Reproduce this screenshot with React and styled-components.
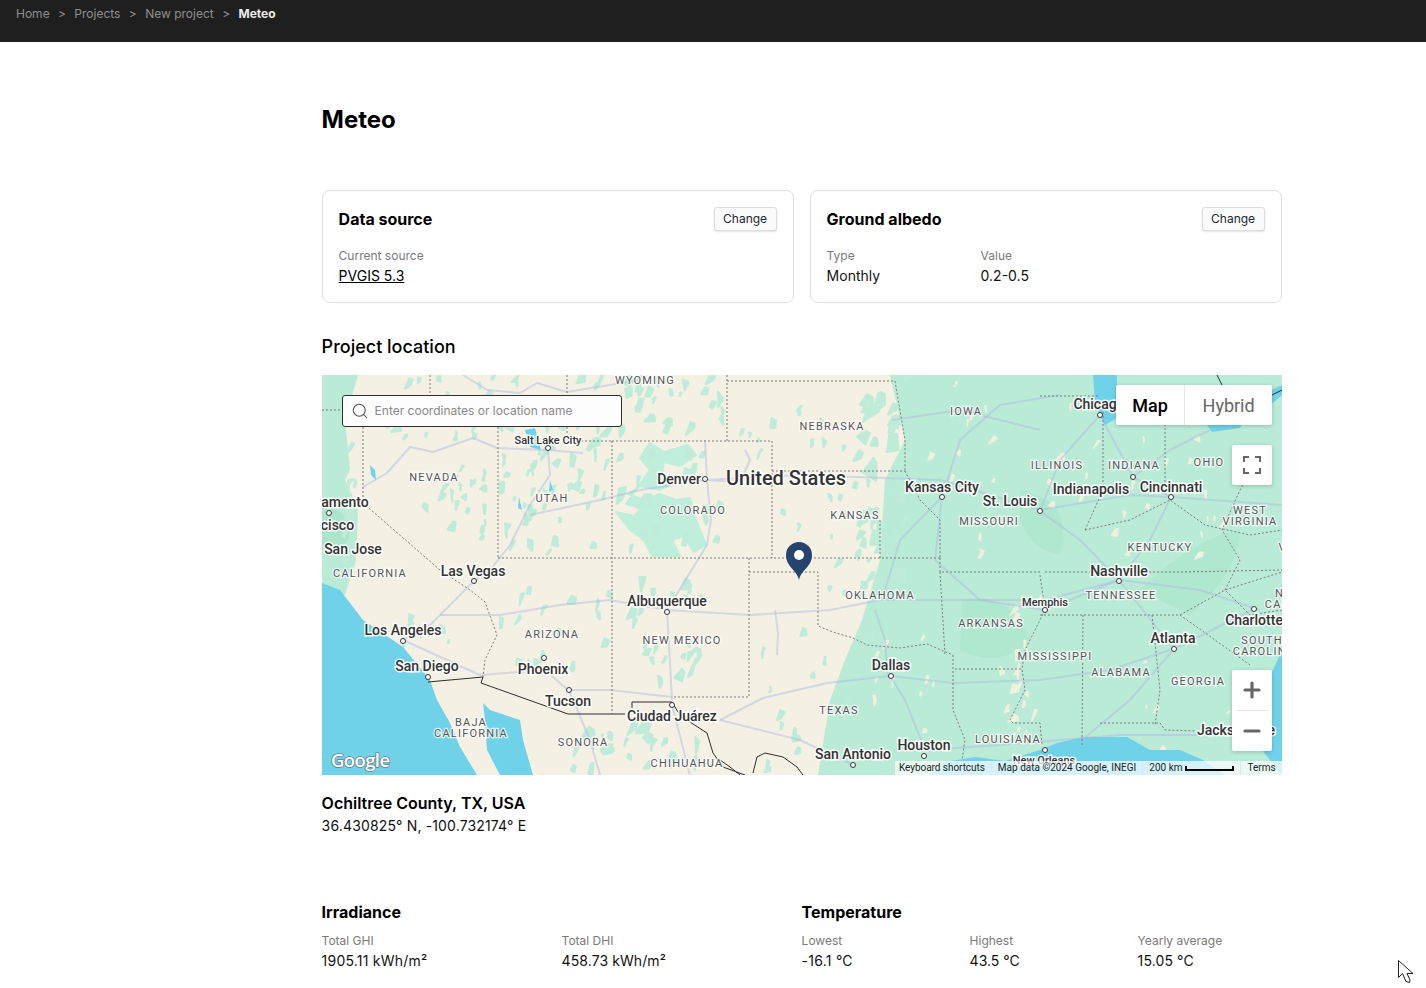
import React from "react";
import styled, { createGlobalStyle } from "styled-components";
import { Search, Plus, Minus } from "lucide-react";

const GlobalStyle = createGlobalStyle`
  html, body {
    margin: 0;
    height: 100%;
    overflow: hidden;
    background: #fff;
    font-family: Inter, "Liberation Sans", sans-serif;
    color: #000;
  }
  * { box-sizing: border-box; }
`;

const Topbar = styled.header`
  height: 42px;
  background: #1f1f1f;
  padding: 6px 16px;
  display: flex;
  align-items: flex-start;
  gap: 8.4px;
  font-size: 12px;
  line-height: 16px;
  color: #8f8f8f;
`;
const Crumb = styled.span`
  font-weight: ${(p) => (p.$active ? 700 : 400)};
  color: ${(p) => (p.$active ? "#ebebeb" : "#8f8f8f")};
`;
const Main = styled.main`
  width: 960px;
  margin-left: 321.6px;
  padding-top: 62px;
`;
const Title = styled.h1`
  margin: 0 0 54px;
  font-size: 24px;
  line-height: 32px;
  font-weight: 700;
`;
const Cards = styled.div`
  display: grid;
  grid-template-columns: 1fr 1fr;
  gap: 16px;
`;
const Card = styled.section`
  height: 113px;
  border: 1px solid #e0e0e0;
  border-radius: 8px;
  padding: 16px;
`;
const CardHead = styled.div`
  display: flex;
  justify-content: space-between;
  align-items: center;
  height: 24px;
  margin-bottom: 17px;
`;
const CardTitle = styled.h2`
  margin: 0;
  font-size: 16px;
  line-height: 24px;
  font-weight: 650;
`;
const Change = styled.button`
  width: 63px;
  height: 24px;
  padding: 0 0 2px;
  border: 1px solid #dcdcdc;
  border-radius: 3px;
  background: #fafafa;
  box-shadow: 0 1px 2px rgba(0, 0, 0, 0.12);
  font: 400 12px Inter, sans-serif;
  color: #1c2733;
`;
const Fields = styled.div`
  display: grid;
  grid-template-columns: 154px 1fr;
`;
const Label = styled.div`
  font-size: 12px;
  line-height: 16px;
  color: #7a7a7a;
  margin-bottom: 2px;
`;
const Value = styled.div`
  font-size: 14px;
  line-height: 20px;
  color: #111;
  letter-spacing: ${(p) => p.$track || 0}px;
`;
const SourceLink = styled.a`
  display: block;
  font-size: 14px;
  line-height: 20px;
  color: #000;
  text-decoration: underline;
`;
const SectionTitle = styled.h2`
  margin: 30px 0 14px;
  font-size: 18px;
  line-height: 28px;
  font-weight: 450;
`;
const MapPane = styled.div`
  position: relative;
  width: 960px;
  height: 400px;
  overflow: hidden;
  background: #f5f0e4;
`;
const MapArt = styled.svg`
  display: block;
  width: 960px;
  height: 400px;
`;
const City = styled.text`
  font-family: Roboto, sans-serif;
  font-weight: 500;
  font-size: ${(p) => p.$size || 14}px;
  fill: #333;
  stroke: rgba(255, 255, 255, 0.9);
  stroke-width: 3px;
  paint-order: stroke;
`;
const StateName = styled.text`
  font-family: Roboto, sans-serif;
  font-weight: 400;
  font-size: 11px;
  letter-spacing: 1.2px;
  fill: #555;
  stroke: rgba(255, 255, 255, 0.8);
  stroke-width: 2.5px;
  paint-order: stroke;
`;
const GoogleMark = styled.text`
  font-family: "Open Sans", sans-serif;
  font-weight: 600;
  font-size: 18.5px;
  letter-spacing: -0.6px;
  fill: #fff;
  stroke: #64808a;
  stroke-width: 1.6px;
  paint-order: stroke;
`;
const SearchBox = styled.label`
  position: absolute;
  left: 20px;
  top: 20px;
  width: 280px;
  height: 32px;
  display: flex;
  align-items: center;
  gap: 6px;
  padding: 0 8px;
  background: #fdfdfd;
  border: 1px solid #2f2f2f;
  border-radius: 3px;
  color: #555;
`;
const SearchInput = styled.input`
  flex: 1;
  min-width: 0;
  border: 0;
  padding: 0 0 1px;
  background: transparent;
  outline: none;
  font: 400 12px Inter, sans-serif;
  &::placeholder { color: #8a8a8a; opacity: 1; }
`;
const MapTypes = styled.div`
  position: absolute;
  top: 10px;
  right: 10px;
  display: flex;
  height: 40px;
  background: #fff;
  border-radius: 2px;
  box-shadow: 0 1px 4px rgba(0, 0, 0, 0.2);
`;
const MapType = styled.button`
  height: 40px;
  width: ${(p) => (p.$active ? 68 : 88)}px;
  padding: 0 0 0 1px;
  border: 0;
  border-left: ${(p) => (p.$active ? "0" : "1px solid #e6e6e6")};
  background: transparent;
  font: ${(p) => (p.$active ? 500 : 400)} 18px Roboto, sans-serif;
  color: ${(p) => (p.$active ? "#000" : "#666")};
`;
const FullscreenBtn = styled.button`
  position: absolute;
  top: 70px;
  right: 10px;
  width: 40px;
  height: 40px;
  padding: 0;
  display: grid;
  place-items: center;
  border: 0;
  border-radius: 2px;
  background: #fff;
  box-shadow: 0 1px 4px rgba(0, 0, 0, 0.2);
`;
const ZoomGroup = styled.div`
  position: absolute;
  top: 295px;
  right: 10px;
  width: 40px;
  height: 81px;
  display: flex;
  flex-direction: column;
  align-items: center;
  border-radius: 2px;
  background: #fff;
  box-shadow: 0 1px 4px rgba(0, 0, 0, 0.2);
`;
const ZoomBtn = styled.button`
  width: 40px;
  height: 40px;
  padding: 0;
  display: grid;
  place-items: center;
  border: 0;
  background: transparent;
  color: #666;
`;
const ZoomRule = styled.div`
  width: 30px;
  height: 1px;
  background: #e6e6e6;
`;
const Attribution = styled.div`
  position: absolute;
  right: 0;
  bottom: 0;
  height: 14px;
  display: flex;
  align-items: center;
  background: rgba(255, 255, 255, 0.7);
  font: 400 10px/14px Roboto, sans-serif;
  color: #222;
  white-space: nowrap;
`;
const AttrItem = styled.span`
  padding: ${(p) => (p.$rule ? "0 6px" : "0 6px 0 4px")};
  border-left: ${(p) => (p.$rule ? "1px solid #d8e8ec" : "0")};
  letter-spacing: ${(p) => (p.$rule ? "0" : "-0.05px")};
`;
const ScaleBar = styled.span`
  display: inline-block;
  width: 49px;
  height: 5px;
  margin-left: 3px;
  border: 2px solid #000;
  border-top: 0;
`;
const PlaceName = styled.h3`
  margin: 16px 0 1px;
  font-size: 16px;
  line-height: 24px;
  font-weight: 600;
`;
const Stats = styled.div`
  display: grid;
  grid-template-columns: 480px 480px;
  margin-top: 64px;
`;
const StatTitle = styled.h3`
  margin: 0 0 9px;
  font-size: 16px;
  line-height: 24px;
  font-weight: 650;
`;
const StatRow = styled.div`
  display: grid;
  grid-template-columns: ${(p) => (p.$three ? "168px 168px 1fr" : "240px 1fr")};
`;
const Pointer = styled.svg`
  position: absolute;
  left: 1397px;
  top: 959px;
`;

// seeded scatter so the terrain texture stays the same between runs
function scatter(regions) {
  let seed = 42;
  const rnd = () => {
    seed = (seed * 16807) % 2147483647;
    return seed / 2147483647;
  };
  const out = [];
  regions.forEach(([x0, x1, y0, y1, n, s = 1]) => {
    for (let i = 0; i < n; i++) {
      const x = x0 + rnd() * (x1 - x0);
      const y = y0 + rnd() * (y1 - y0);
      const k = s * (0.4 + rnd() * 0.8);
      const a = (rnd() * 8 - 2) * k;
      const b = (-4 - rnd() * 9) * k;
      const c = (1 + rnd() * 4) * k;
      const d = (rnd() * 4 - 1) * k;
      const e = (rnd() * 5 - 4) * k;
      const f = (3 + rnd() * 7) * k;
      out.push(
        `M${x.toFixed(1)} ${y.toFixed(1)}l${a.toFixed(1)} ${b.toFixed(1)}l${c.toFixed(1)} ${d.toFixed(1)}l${e.toFixed(1)} ${f.toFixed(1)}z`
      );
    }
  });
  return out.join("");
}

const westPatches = scatter([
  [340, 362, 440, 560, 10, 1.1],
  [365, 500, 378, 440, 22, 0.9],
  [420, 498, 470, 540, 20, 0.9],
  [500, 612, 380, 450, 24, 1.3],
  [500, 612, 450, 556, 38, 1.1],
  [612, 725, 380, 440, 26, 1.2],
  [612, 725, 450, 556, 26, 1.2],
  [620, 700, 570, 690, 24, 1.2],
  [500, 610, 590, 680, 18, 0.9],
  [730, 880, 390, 470, 14, 0.9],
  [770, 880, 480, 620, 18, 0.8],
  [360, 480, 620, 680, 16, 1],
  [560, 700, 730, 775, 24, 1.3],
  [760, 850, 630, 775, 14, 0.9],
  [855, 905, 375, 640, 34, 1.6],
]);
const eastPale = scatter([
  [1000, 1040, 600, 740, 26, 1],
  [905, 1000, 385, 560, 14, 0.9],
  [1040, 1240, 395, 560, 30, 0.8],
  [1130, 1260, 660, 760, 8, 0.7],
  [850, 940, 640, 740, 10, 0.8],
]);

const borders = [
  "M322 410H342", "M430 375V395", "M363 427V503L440 570L470 590L485 602L497 635L485 660L483 677",
  "M498 427V558", "M567 375V441H612", "M612 441V714", "M612 441H772V558", "M727 375V441",
  "M727 381H895", "M772 471H905", "M498 558H940", "M749 558V697H672",
  "M749 572H818V626L833 632L853 638L867 645L900 648L927 644L953 655",
  "M940 558V572H1040", "M940 572L945 655", "M953 655V710L965 740L962 760",
  "M955 669H1022L1025 690L1010 720L1013 723H1040L1042 745",
  "M880 520V558", "M905 471L920 500L940 520V558", "M895 381L905 440L905 471",
  "M1040 396H1100", "M1103 400V490L1085 530", "M1165 420V490", "M1040 575L1045 610L1025 650L1022 669",
  "M1040 615H1180L1225 590L1282 572", "M1045 572H1180L1282 570", "M1083 615L1082 745",
  "M1152 615L1160 690L1155 725", "M1100 723H1160L1165 730L1232 732",
  "M1180 615L1215 640L1250 665", "M1282 610L1250 615L1225 590", "M1085 530L1130 520L1170 500L1205 525L1250 535L1282 530",
  "M1225 590L1240 560L1222 530L1240 490L1260 455",
];

const roads = [
  "M463 375L487 390L520 393L537 383L567 392L640 380",
  "M363 487L387 473L410 447L433 452L473 438L497 448L547 450L583 453",
  "M548 450L550 475L530 505L510 545L490 570L475 580L430 625L403 640",
  "M530 515L600 500L640 490L705 480L740 482L750 460L745 450M705 480L800 475L940 480L1040 510L1130 495L1170 497L1282 505",
  "M440 615L500 615L560 605L610 600L667 610L750 615L830 610L880 600L980 600L1045 600L1120 580L1200 590L1260 610",
  "M403 640L480 675L545 670L568 690L610 690L672 697",
  "M720 720L763 698L827 683L890 676L953 683L1040 680L1110 670L1170 650",
  "M720 720L800 740L853 765",
  "M890 676L905 700L925 750", "M888 676L885 640L875 610", "M925 750L1000 745L1060 740L1120 735L1200 735",
  "M705 440L707 480L711 520L707 545L667 610L672 700", "M1100 415L1133 477L1171 497L1150 540L1119 580L1045 610", "M1174 649L1119 580",
  "M1174 649L1130 700L1082 740", "M1174 649L1254 609", "M942 497L935 560L980 600L1045 610", "M1133 477L1170 450L1210 430",
  "M1040 511L1080 540L1119 580", "M1100 415L1060 460L1040 511", "M942 497L960 440L1000 405L1060 395", "M882 600L900 540L942 497",
  "M775 610L778 633L777 655", "M569 690L590 740L600 775", "M672 705L690 775", "M892 420L960 410L1040 430",
];

const states = [
  ["WYOMING", 645, 384], ["NEBRASKA", 832, 430], ["IOWA", 966, 415], ["NEVADA", 434, 481], ["UTAH", 552, 502],
  ["COLORADO", 693, 514], ["KANSAS", 855, 519], ["ILLINOIS", 1057, 469], ["INDIANA", 1134, 469], ["OHIO", 1209, 466],
  ["MISSOURI", 989, 525], ["WEST", 1250, 514], ["VIRGINIA", 1250, 525], ["KENTUCKY", 1160, 551], ["TENNESSEE", 1121, 599],
  ["OKLAHOMA", 880, 599], ["ARKANSAS", 991, 627], ["MISSISSIPPI", 1055, 660], ["ALABAMA", 1121, 676], ["GEORGIA", 1198, 685],
  ["CALIFORNIA", 370, 577], ["ARIZONA", 552, 638], ["NEW MEXICO", 682, 644], ["TEXAS", 839, 714], ["LOUISIANA", 1008, 743],
  ["BAJA", 471, 726], ["CALIFORNIA", 471, 737], ["SONORA", 583, 746], ["CHIHUAHUA", 687, 767], ["SOUTH", 1262, 644],
  ["CAROLINA", 1264, 655], ["NORTH", 1296, 597], ["CAROLINA", 1296, 608], ["VIRGINIA", 1306, 551],
];

const cities = [
  ["Denver", 679, 484], ["Kansas City", 942, 492], ["St. Louis", 1010, 506], ["Indianapolis", 1091, 494],
  ["Cincinnati", 1171, 492], ["Nashville", 1119, 576], ["Atlanta", 1173, 643], ["Las Vegas", 473, 576],
  ["Albuquerque", 667, 606], ["Los Angeles", 403, 635], ["San Diego", 427, 671], ["Phoenix", 543, 674],
  ["Tucson", 568, 706], ["Ciudad Juárez", 672, 721], ["Dallas", 891, 670], ["Houston", 924, 750],
  ["San Antonio", 853, 759], ["Chicago", 1099, 409], ["Charlotte", 1254, 625], ["Jacksonville", 1236, 735],
  ["Sacramento", 331, 507], ["San Francisco", 310, 530], ["San Jose", 353, 554],
];

const dots = [
  [548, 448], [705, 479], [942, 497], [1040, 511], [1133, 477], [1171, 497], [1100, 415], [1119, 581], [1045, 610],
  [1254, 609], [1174, 649], [474, 581], [667, 612], [403, 641], [428, 677], [544, 658], [569, 690], [672, 705],
  [891, 676], [924, 756], [853, 765], [329, 513], [1045, 750],
];

function ProjectMap() {
  return (
    <MapArt viewBox="322 375 960 400">
      {/* green east of the plains */}
      <path
        fill="#b9ebd6"
        d="M890 375L905 440L885 480L880 560L862 620L845 660L830 700L818 775H1282V375Z"
      />
      <path
        fill="#b0e7cf"
        d="M962 600Q1010 590 1030 640Q1000 670 960 650ZM1020 490Q1075 500 1060 555Q1030 550 1020 520ZM1140 590Q1190 540 1240 530Q1240 570 1190 615Z"
      />
      <path fill="#b9ebd6" d="M322 375H358L345 420L350 470L345 480L358 510L356 560L345 595L322 583Z" />
      <path fill="#abe5cc" d="M322 505Q345 505 350 535Q340 560 322 550Z" />
      {/* colorado rockies, lobed like the reference */}
      <path
        fill="#bfeeda"
        stroke="#bfeeda"
        strokeWidth="2"
        strokeLinejoin="round"
        d="M650 443L664 452L688 445L696 455L680 466L664 462L662 474L672 482L660 490L640 486L628 494L644 500L660 494L676 500L690 498L696 520L706 545L694 552L684 536L672 540L680 556L652 556L644 540L630 530L616 512L634 516L642 508L626 504L640 484L650 470L640 458Z"
      />
      <path fill="#bfecd9" stroke="#bfecd9" strokeWidth="2.5" strokeLinejoin="round" d={westPatches} />
      <path fill="#f1efe0" stroke="#f1efe0" strokeWidth="1.5" strokeLinejoin="round" d={eastPale} />

      {/* water */}
      <g fill="#70d2e8">
        <path d="M322 583L340 590L363 620L403 647L430 680L437 700L450 723L460 747L477 775H322Z" />
        <path d="M483 703L490 710L520 720L523 740L533 775H500L487 750L485 720Z" />
        <path d="M930 775L945 762L975 757L1005 761L1040 750L1057 743L1083 737L1127 737L1150 750L1180 750L1203 760L1225 775Z" />
        <path d="M1282 650L1272 672L1268 710L1262 750L1282 775Z" />
        <path d="M1093 375H1117V418L1105 425L1095 405Z" />
        <path d="M1250 400L1282 385V395L1262 412Z" />
        <path d="M1207 425L1247 412L1240 428L1212 432Z" />
        <path d="M525 430L535 428L541 450L530 447Z" />
        <path d="M370 465L375 470L376 480L371 475ZM550 480L553 490L549 492ZM519 497L522 510L518 508Z" />
      </g>

      <g fill="none" stroke="rgba(170, 185, 225, 0.45)" strokeWidth="2" strokeLinejoin="round">
        {roads.map((d) => <path key={d} d={d} />)}
      </g>
      <g fill="none" stroke="#7d7d7d" strokeWidth="1" strokeDasharray="2 2">
        {borders.map((d) => <path key={d} d={d} />)}
      </g>
      <g fill="none" stroke="#2e2e2e" strokeWidth="1">
        <path d="M428 682L483 677L481 683L568 714H625" />
        <path d="M632 708V702H672L678 712L690 722L707 733L713 753L723 767L745 775" />
        <path d="M720 760L730 767L740 775M753 773L757 757L765 753L783 757L797 767L803 775" />
        <path d="M1217 375L1222 385M1272 395L1282 390" />
      </g>

      {states.map(([name, x, y]) => (
        <StateName key={`${name}-${x}`} x={x} y={y} textAnchor="middle">{name}</StateName>
      ))}
      {cities.map(([name, x, y]) => (
        <City key={name} x={x} y={y} textAnchor="middle">{name}</City>
      ))}
      <City x="548" y="444" textAnchor="middle" $size={11}>Salt Lake City</City>
      <City x="1045" y="606" textAnchor="middle" $size={11}>Memphis</City>
      <City x="1044" y="764" textAnchor="middle" $size={11}>New Orleans</City>
      <City x="786" y="485" textAnchor="middle" $size={20}>United States</City>
      {dots.map(([x, y]) => (
        <circle key={`${x}-${y}`} cx={x} cy={y} r="2.5" fill="#fff" stroke="#333" strokeWidth="1" />
      ))}
      <GoogleMark x="331" y="767">Google</GoogleMark>

      {/* project pin */}
      <path
        fill="#27446c"
        d="M799 580C797 570 786 567 786 555a13 13 0 0 1 26 0C812 567 801 570 799 580Z"
      />
      <circle cx="799" cy="555" r="5" fill="#fff" />
    </MapArt>
  );
}

export default function App() {
  return (
    <>
      <GlobalStyle />
      <Topbar>
        <Crumb>Home</Crumb><span>&gt;</span>
        <Crumb>Projects</Crumb><span>&gt;</span>
        <Crumb>New project</Crumb><span>&gt;</span>
        <Crumb $active>Meteo</Crumb>
      </Topbar>
      <Main>
        <Title>Meteo</Title>
        <Cards>
          <Card>
            <CardHead>
              <CardTitle>Data source</CardTitle>
              <Change>Change</Change>
            </CardHead>
            <Label>Current source</Label>
            <SourceLink href="#pvgis">PVGIS 5.3</SourceLink>
          </Card>
          <Card>
            <CardHead>
              <CardTitle>Ground albedo</CardTitle>
              <Change>Change</Change>
            </CardHead>
            <Fields>
              <div>
                <Label>Type</Label>
                <Value>Monthly</Value>
              </div>
              <div>
                <Label>Value</Label>
                <Value>0.2-0.5</Value>
              </div>
            </Fields>
          </Card>
        </Cards>

        <SectionTitle>Project location</SectionTitle>
        <MapPane>
          <ProjectMap />
          <SearchBox>
            <Search size={18} strokeWidth={1.4} />
            <SearchInput placeholder="Enter coordinates or location name" />
          </SearchBox>
          <MapTypes>
            <MapType $active>Map</MapType>
            <MapType>Hybrid</MapType>
          </MapTypes>
          <FullscreenBtn>
            <svg width="18" height="18" viewBox="0 0 18 18" fill="none" stroke="#666" strokeWidth="2">
              <path d="M1 6V1H6M12 1H17V6M17 12V17H12M6 17H1V12" />
            </svg>
          </FullscreenBtn>
          <ZoomGroup>
            <ZoomBtn><Plus size={24} strokeWidth={3.2} absoluteStrokeWidth /></ZoomBtn>
            <ZoomRule />
            <ZoomBtn><Minus size={24} strokeWidth={3.2} absoluteStrokeWidth /></ZoomBtn>
          </ZoomGroup>
          <Attribution>
            <AttrItem>Keyboard shortcuts</AttrItem>
            <AttrItem $rule>Map data ©2024 Google, INEGI</AttrItem>
            <AttrItem $rule>200 km<ScaleBar /></AttrItem>
            <AttrItem $rule>Terms</AttrItem>
          </Attribution>
        </MapPane>

        <PlaceName>Ochiltree County, TX, USA</PlaceName>
        <Value $track={0.15}>36.430825° N, -100.732174° E</Value>

        <Stats>
          <section>
            <StatTitle>Irradiance</StatTitle>
            <StatRow>
              <div>
                <Label>Total GHI</Label>
                <Value $track={0.22}>1905.11 kWh/m²</Value>
              </div>
              <div>
                <Label>Total DHI</Label>
                <Value $track={0.08}>458.73 kWh/m²</Value>
              </div>
            </StatRow>
          </section>
          <section>
            <StatTitle>Temperature</StatTitle>
            <StatRow $three>
              <div>
                <Label>Lowest</Label>
                <Value $track={0.25}>-16.1 °C</Value>
              </div>
              <div>
                <Label>Highest</Label>
                <Value>43.5 °C</Value>
              </div>
              <div>
                <Label>Yearly average</Label>
                <Value $track={0.12}>15.05 °C</Value>
              </div>
            </StatRow>
          </section>
        </Stats>
      </Main>
      <Pointer width="18" height="25" viewBox="0 0 18 25">
        <path
          d="M1.5 1.5V18.5L5.5 14.5L9 22.5L12.5 23.5L13 21L10 14.5H16Z"
          fill="#fff"
          stroke="#222"
          strokeWidth="1"
          strokeLinejoin="round"
        />
      </Pointer>
    </>
  );
}
